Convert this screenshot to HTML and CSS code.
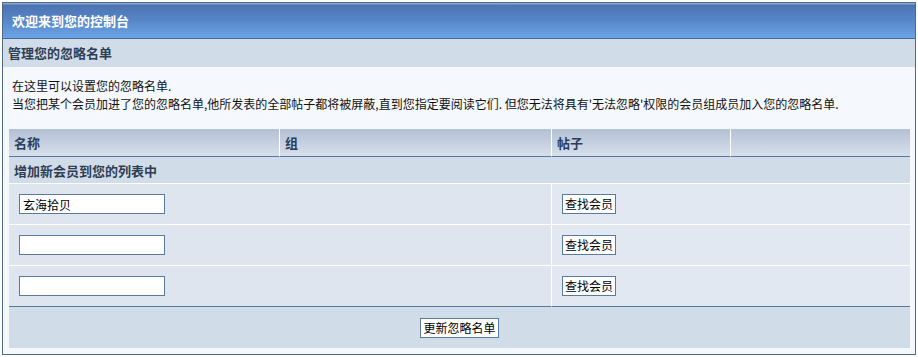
FILE: index.html
```html
<!DOCTYPE html>
<html>
<head>
    <meta charset="utf-8">
    <title>控制台 - 忽略名单</title>
    <link rel="stylesheet" href="styles.css">
</head>
<body>
    <div class="panel">
        <!-- Title -->
        <div class="panel-title">欢迎来到您的控制台</div>
        <div class="panel-sub">管理您的忽略名单</div>

        <div class="panel-body">
            <p class="intro">
                在这里可以设置您的忽略名单.<br>
                当您把某个会员加进了您的忽略名单,他所发表的全部帖子都将被屏蔽,直到您指定要阅读它们. 但您无法将具有'无法忽略'权限的会员组成员加入您的忽略名单.
            </p>

            <table class="list">
                <tr class="head">
                    <th class="c1">名称</th>
                    <th class="c2">组</th>
                    <th class="c3">帖子</th>
                    <th class="c4"></th>
                </tr>
                <tr class="cat">
                    <td colspan="4">增加新会员到您的列表中</td>
                </tr>
                <tr class="entry">
                    <td colspan="2" class="left"><input type="text" class="field" value="玄海拾贝"></td>
                    <td colspan="2" class="right"><button class="btn">查找会员</button></td>
                </tr>
                <tr class="entry">
                    <td colspan="2" class="left"><input type="text" class="field"></td>
                    <td colspan="2" class="right"><button class="btn">查找会员</button></td>
                </tr>
                <tr class="entry last">
                    <td colspan="2" class="left"><input type="text" class="field"></td>
                    <td colspan="2" class="right"><button class="btn">查找会员</button></td>
                </tr>
                <tr class="foot">
                    <td colspan="4"><button class="btn">更新忽略名单</button></td>
                </tr>
            </table>
        </div>
    </div>
</body>
</html>
```

FILE: styles.css
```css
body {
    margin: 2px;
    background: #ffffff;
    font-family: "Noto Sans CJK SC", "DejaVu Sans", sans-serif;
    font-size: 12px;
    color: #000;
}

/* Outer box */
.panel {
    border: 1px solid #4e6a85;
}

.panel-title {
    height: 35px;
    line-height: 35px;
    padding-left: 9px;
    color: #fff;
    font-size: 13px;
    font-weight: bold;
    background: linear-gradient(#86a6d3 0, #86a6d3 1px, #4d73b1 2px, #5584c6 45%, #6ca4e6 100%);
    border-bottom: 1px solid #4a6890;
}

.panel-sub {
    height: 28px;
    line-height: 28px;
    padding-left: 5px;
    font-size: 13px;
    font-weight: bold;
    color: #2f3d52;
    background: #d1dce9;
}

.panel-body {
    background: #f5f8fc;
    padding: 10px 5px 6px 6px;
}

.intro {
    margin: 0 0 16px 0;
    padding-left: 3px;
    line-height: 18px;
    color: #111;
}

/* List table */
.list {
    width: 100%;
    border-collapse: separate;
    border-spacing: 0;
    table-layout: fixed;
}

.list th,
.list td {
    box-sizing: border-box;
    padding: 0;
}

.head th {
    height: 28px;
    padding-left: 5px;
    text-align: left;
    font-size: 13px;
    font-weight: bold;
    color: #2c3d5a;
    background: linear-gradient(#b3c0d4, #d7dfeb);
    border-bottom: 1px solid #56779f;
}

.head .c1 { width: 271px; border-right: 1px solid #fff; }
.head .c2 { width: 272px; border-right: 1px solid #fff; }
.head .c3 { width: 179px; border-right: 1px solid #fff; }

.cat td {
    height: 27px;
    padding-left: 5px;
    font-size: 13px;
    font-weight: bold;
    color: #2f3d52;
    background: #d1dce9;
    border-bottom: 1px solid #fff;
}

.entry td {
    height: 41px;
    padding-left: 10px;
    border-bottom: 1px solid #fff;
}

.entry .left {
    background: #dee5ee;
    border-right: 1px solid #fff;
}

.entry .right {
    background: #e1e8f1;
}

.entry.last td {
    border-bottom-color: #56779f;
}

.foot td {
    height: 41px;
    text-align: center;
    background: #d1dce9;
}

/* Form controls */
.field {
    box-sizing: border-box;
    width: 146px;
    height: 20px;
    margin: 0;
    padding: 0 3px;
    border: 1px solid #5a7a9c;
    background: #fff;
    font-family: inherit;
    font-size: 12px;
    color: #000;
    vertical-align: middle;
}

.btn {
    box-sizing: border-box;
    height: 20px;
    margin: 0;
    padding: 0 2px;
    border: 1px solid #5a7a9c;
    background: #fff;
    font-family: inherit;
    font-size: 12px;
    line-height: 18px;
    color: #000;
    vertical-align: middle;
}
```
